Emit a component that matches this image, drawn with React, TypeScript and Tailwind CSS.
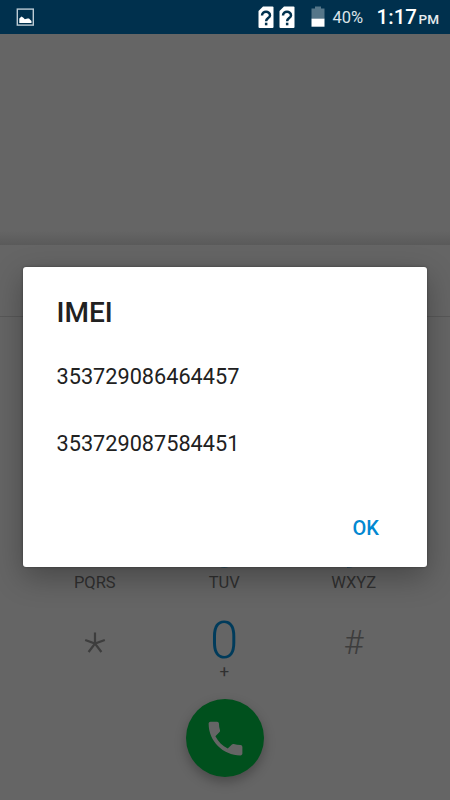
const keys = [
    { digit: "7", letters: "PQRS" },
    { digit: "8", letters: "TUV" },
    { digit: "9", letters: "WXYZ" },
];

const imeis = ["353729086464457", "353729087584451"];

function SimIcon() {
    return (
        <svg width="16" height="23" viewBox="0 0 16 23">
            <path d="M5 0.5H14.5Q15.5 0.5 15.5 1.5V21Q15.5 22 14.5 22H1.5Q0.5 22 0.5 21V5Z" fill="#fff" />
            <path d="M4 9.6C4 4.6 12 4.6 12 9.4C12 12 8.1 12.2 8.1 15.2" fill="none" stroke="#00314e" strokeWidth="2.5" />
            <rect x="6.9" y="16.7" width="2.5" height="2.6" fill="#00314e" />
        </svg>
    );
}

function StatusBar() {
    return (
        <header className="flex h-[34px] shrink-0 items-center bg-[#00304d] pl-[16px] pr-[11px] text-white">
            <svg width="18" height="18" viewBox="0 0 18 18">
                <rect x="1.3" y="1.1" width="16" height="16" fill="none" stroke="#bccbd4" strokeWidth="1.4" />
                <path d="M3.3 15V10.4L5.5 8.6L7.4 9.8L8.8 11.2L11.5 10.4L13 10.4L15.5 13V15Z" fill="#fff" />
            </svg>
            <div className="ml-auto flex gap-[5px]">
                <SimIcon />
                <SimIcon />
            </div>
            <svg className="mb-[2px] ml-[16px]" width="14" height="21" viewBox="0 0 14 21">
                <path d="M4 0.5H10V2.5H13.5V13H0.5V2.5H4Z" fill="#557689" />
                <rect x="0.5" y="12.7" width="13" height="8" fill="#fff" />
            </svg>
            <span className="ml-[8px] mt-[2px] w-[32px] whitespace-nowrap text-[16.5px] text-[#dce3e8]">40%</span>
            <div className="ml-[12px] mt-[1px] flex items-baseline whitespace-nowrap font-medium">
                <span className="w-[39px] text-[20.5px]">1:17</span>
                <span className="ml-[3px] text-[13.5px] text-[#e6ecef]">PM</span>
            </div>
        </header>
    );
}

export default function App() {
    return (
        <main className="relative flex h-[800px] w-[450px] flex-col overflow-hidden bg-[#656565] font-['Roboto',sans-serif]">
            <StatusBar />
            <div className="flex h-[211px] shrink-0 flex-col justify-end">
                <div className="h-[14px] bg-linear-to-b from-[#656565] to-[#5a5a5a]" />
            </div>
            <div className="h-[72px] shrink-0 border-b border-[#585858]" />

            <section className="mt-auto pl-[30px] pr-[31.5px]">
                <div className="grid grid-cols-3 text-center text-[#303030]">
                    {keys.map((key) => (
                        <div key={key.digit} className="flex flex-col items-center">
                            <span className="text-[51px] font-light leading-[47px] text-[#003b5b]">{key.digit}</span>
                            <span className="text-[16.5px] leading-[20px]">{key.letters}</span>
                        </div>
                    ))}
                </div>
                <div className="mt-[17px] grid h-[72px] grid-cols-3 text-center">
                    <svg className="mx-auto mt-[22px]" width="22" height="22" viewBox="0 0 22 22" fill="none" stroke="#3d3d3d" strokeWidth="2.2">
                        <path d="M11 0.5V11.5M1.2 8L11 11.5L20.8 8M4.6 20L11 11.5L17.4 20" />
                    </svg>
                    <div className="flex flex-col items-center pt-[6px]">
                        <span className="text-[51px] font-light leading-[50px] text-[#003b5b]">0</span>
                        <span className="text-[17px] leading-[11px] text-[#303030]">+</span>
                    </div>
                    <span className="text-[34px] font-light leading-[65px] text-[#3d3d3d]">#</span>
                </div>
                <div className="mt-[17px] flex justify-center pb-[23px]">
                    <button className="ml-[2px] flex size-[78px] items-center justify-center rounded-full bg-[#00501d] shadow-[0_5px_12px_rgba(0,0,0,0.28)]">
                        <svg width="45" height="45" viewBox="0 0 24 24" fill="#656565">
                            <path d="M6.62 10.79c1.44 2.83 3.76 5.14 6.59 6.59l2.2-2.2c.27-.27.67-.36 1.02-.24 1.12.37 2.33.57 3.57.57.55 0 1 .45 1 1V20c0 .55-.45 1-1 1-9.39 0-17-7.61-17-17 0-.55.45-1 1-1h3.5c.55 0 1 .45 1 1 0 1.25.2 2.45.57 3.57.11.35.03.74-.25 1.02l-2.2 2.2z" />
                        </svg>
                    </button>
                </div>
            </section>

            {/* dialog over the dimmed dialer */}
            <div role="dialog" className="absolute left-[23px] top-[267px] flex h-[300px] w-[404px] flex-col rounded-[3px] bg-white px-[33.5px] pt-[28px] text-[#212121] shadow-[0_10px_30px_rgba(0,0,0,0.3),0_0_3px_rgba(0,0,0,0.35)]">
                <h1 className="text-[28px] font-medium leading-[36px]">IMEI</h1>
                <div className="mt-[29px] flex flex-col gap-[34px]">
                    {imeis.map((imei) => (
                        <p key={imei} className="text-[21.7px] leading-[33px]">{imei}</p>
                    ))}
                </div>
                <button className="mr-[14.5px] mt-[54px] self-end text-[20px] font-medium leading-[28px] text-[#0288d1]">OK</button>
            </div>
        </main>
    );
}
